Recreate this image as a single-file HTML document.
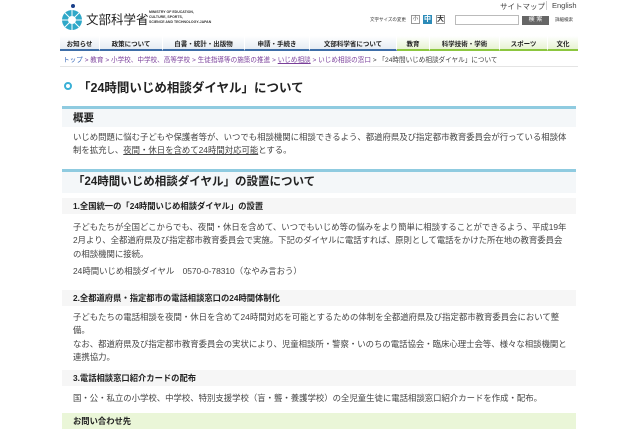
<!DOCTYPE html>
<html><head><meta charset="utf-8"><style>
*{margin:0;padding:0;box-sizing:border-box}
body{width:640px;height:426px;overflow:hidden;background:#fff;font-family:"Liberation Sans","Noto Sans CJK JP",sans-serif;color:#333;position:relative}
.a{position:absolute;white-space:nowrap}
.nav{position:absolute;top:36px;left:60px;width:518px;height:15px;display:flex;font-size:6.5px;font-weight:bold;color:#222}
.nav div{display:flex;align-items:center;justify-content:center;border-right:1px solid #fff}
.b{background:linear-gradient(#fff,#e6ecf3);border-bottom:2px solid #3e6ea8}
.g{background:linear-gradient(#fff,#e7f3d2);border-bottom:2px solid #8cc63f}
.txt{font-size:8.4px;line-height:13.3px;color:#444;left:73px}
.sh{left:62px;width:514px;height:16px;background:#f6f6f6;font-size:8.3px;font-weight:bold;padding-left:11px;line-height:16px;color:#222}
.bar{left:62px;width:514px;height:3px;background:#8fcbe0}
.h{left:62px;width:514px;background:#f4f7f9;font-weight:bold;color:#222;padding-left:11px}
</style></head><body>
<svg class="a" style="left:59px;top:3px" width="28" height="28" viewBox="0 0 28 28"><circle cx="14" cy="3" r="2" fill="#1a3f8a"/><circle cx="13" cy="17" r="10" fill="#2fa8c8"/><circle cx="13" cy="17" r="4" fill="#fff"/><g stroke="#fff" stroke-width="1"><line x1="13" y1="7" x2="13" y2="27"/><line x1="3" y1="17" x2="23" y2="17"/><line x1="6" y1="10" x2="20" y2="24"/><line x1="20" y1="10" x2="6" y2="24"/></g></svg>
<div class="a" style="left:86px;top:9px;font-size:12.5px;color:#222">文部科学省</div>
<div class="a" style="left:149px;top:10px;font-size:3.5px;line-height:5px;font-weight:bold;color:#333">MINISTRY OF EDUCATION,<br>CULTURE, SPORTS,<br>SCIENCE AND TECHNOLOGY-JAPAN</div>
<div class="a" style="left:500px;top:1px;font-size:7.5px;color:#444">サイトマップ</div>
<div class="a" style="left:546px;top:1px;font-size:7.5px;color:#444;border-left:1px solid #ccc;padding-left:5px">English</div>
<div class="a" style="left:370px;top:17px;font-size:4.5px;color:#333">文字サイズの変更</div>
<div class="a" style="left:411px;top:15px;width:9px;height:9px;border:1px solid #999;font-size:5px;text-align:center;line-height:7px">小</div>
<div class="a" style="left:423px;top:15px;width:9px;height:9px;background:#2c8bb8;color:#fff;font-size:7px;text-align:center;line-height:9px;font-weight:bold">中</div>
<div class="a" style="left:436px;top:15px;width:9px;height:9px;border:1px solid #999;font-size:7px;text-align:center;line-height:7px;font-weight:bold">大</div>
<div class="a" style="left:455px;top:15px;width:64px;height:10px;border:1px solid #bbb"></div>
<div class="a" style="left:522px;top:16px;width:27px;height:9px;background:#666;color:#fff;font-size:6px;text-align:center;line-height:9px">検 索</div>
<div class="a" style="left:555px;top:17px;font-size:4.5px;color:#333">詳細検索</div>
<div class="nav">
<div class="b" style="width:40px">お知らせ</div><div class="b" style="width:63px">政策について</div><div class="b" style="width:82px">白書・統計・出版物</div><div class="b" style="width:65px">申請・手続き</div><div class="b" style="width:87px">文部科学省について</div><div class="g" style="width:33px">教育</div><div class="g" style="width:70px">科学技術・学術</div><div class="g" style="width:48px">スポーツ</div><div class="g" style="width:30px;border-right:0">文化</div>
</div>
<div class="a" style="left:63px;top:54px;font-size:6.6px;color:#7a3f9a"><span style="color:#3667b8">トップ</span> &gt; 教育 &gt; 小学校、中学校、高等学校 &gt; 生徒指導等の施策の推進 &gt; <u>いじめ相談</u> &gt; いじめ相談の窓口 <span style="color:#444">&gt; 「24時間いじめ相談ダイヤル」について</span></div>
<div class="a" style="left:60px;top:66px;width:518px;height:1px;background:#e4e4e4"></div>
<div class="a" style="left:64px;top:82px;width:8px;height:8px;border-radius:50%;border:2.3px solid #3ab0d6"></div>
<div class="a" style="left:78px;top:77px;font-size:12.5px;font-weight:bold;color:#222">「24時間いじめ相談ダイヤル」について</div>
<div class="a bar" style="top:106px"></div>
<div class="a h" style="top:109px;height:18px;font-size:10.5px;line-height:18px">概要</div>
<div class="a txt" style="top:131px">いじめ問題に悩む子どもや保護者等が、いつでも相談機関に相談できるよう、都道府県及び指定都市教育委員会が行っている相談体<br>制を拡充し、<u>夜間・休日を含めて24時間対応可能</u>とする。</div>
<div class="a bar" style="top:169px"></div>
<div class="a h" style="top:172px;height:21px;font-size:11.5px;line-height:21px">「24時間いじめ相談ダイヤル」の設置について</div>
<div class="a sh" style="top:198px">1.全国統一の「24時間いじめ相談ダイヤル」の設置</div>
<div class="a txt" style="top:221px">子どもたちが全国どこからでも、夜間・休日を含めて、いつでもいじめ等の悩みをより簡単に相談することができるよう、平成19年<br>2月より、全都道府県及び指定都市教育委員会で実施。下記のダイヤルに電話すれば、原則として電話をかけた所在地の教育委員会<br>の相談機関に接続。</div>
<div class="a txt" style="top:265px">24時間いじめ相談ダイヤル　0570-0-78310（なやみ言おう）</div>
<div class="a sh" style="top:290px">2.全都道府県・指定都市の電話相談窓口の24時間体制化</div>
<div class="a txt" style="top:311px">子どもたちの電話相談を夜間・休日を含めて24時間対応を可能とするための体制を全都道府県及び指定都市教育委員会において整<br>備。<br>なお、都道府県及び指定都市教育委員会の実状により、児童相談所・警察・いのちの電話協会・臨床心理士会等、様々な相談機関と<br>連携協力。</div>
<div class="a sh" style="top:370px">3.電話相談窓口紹介カードの配布</div>
<div class="a txt" style="top:392px">国・公・私立の小学校、中学校、特別支援学校（盲・聾・養護学校）の全児童生徒に電話相談窓口紹介カードを作成・配布。</div>
<div class="a sh" style="top:413px;height:16px;background:#eaf6d8">お問い合わせ先</div>
</body></html>
